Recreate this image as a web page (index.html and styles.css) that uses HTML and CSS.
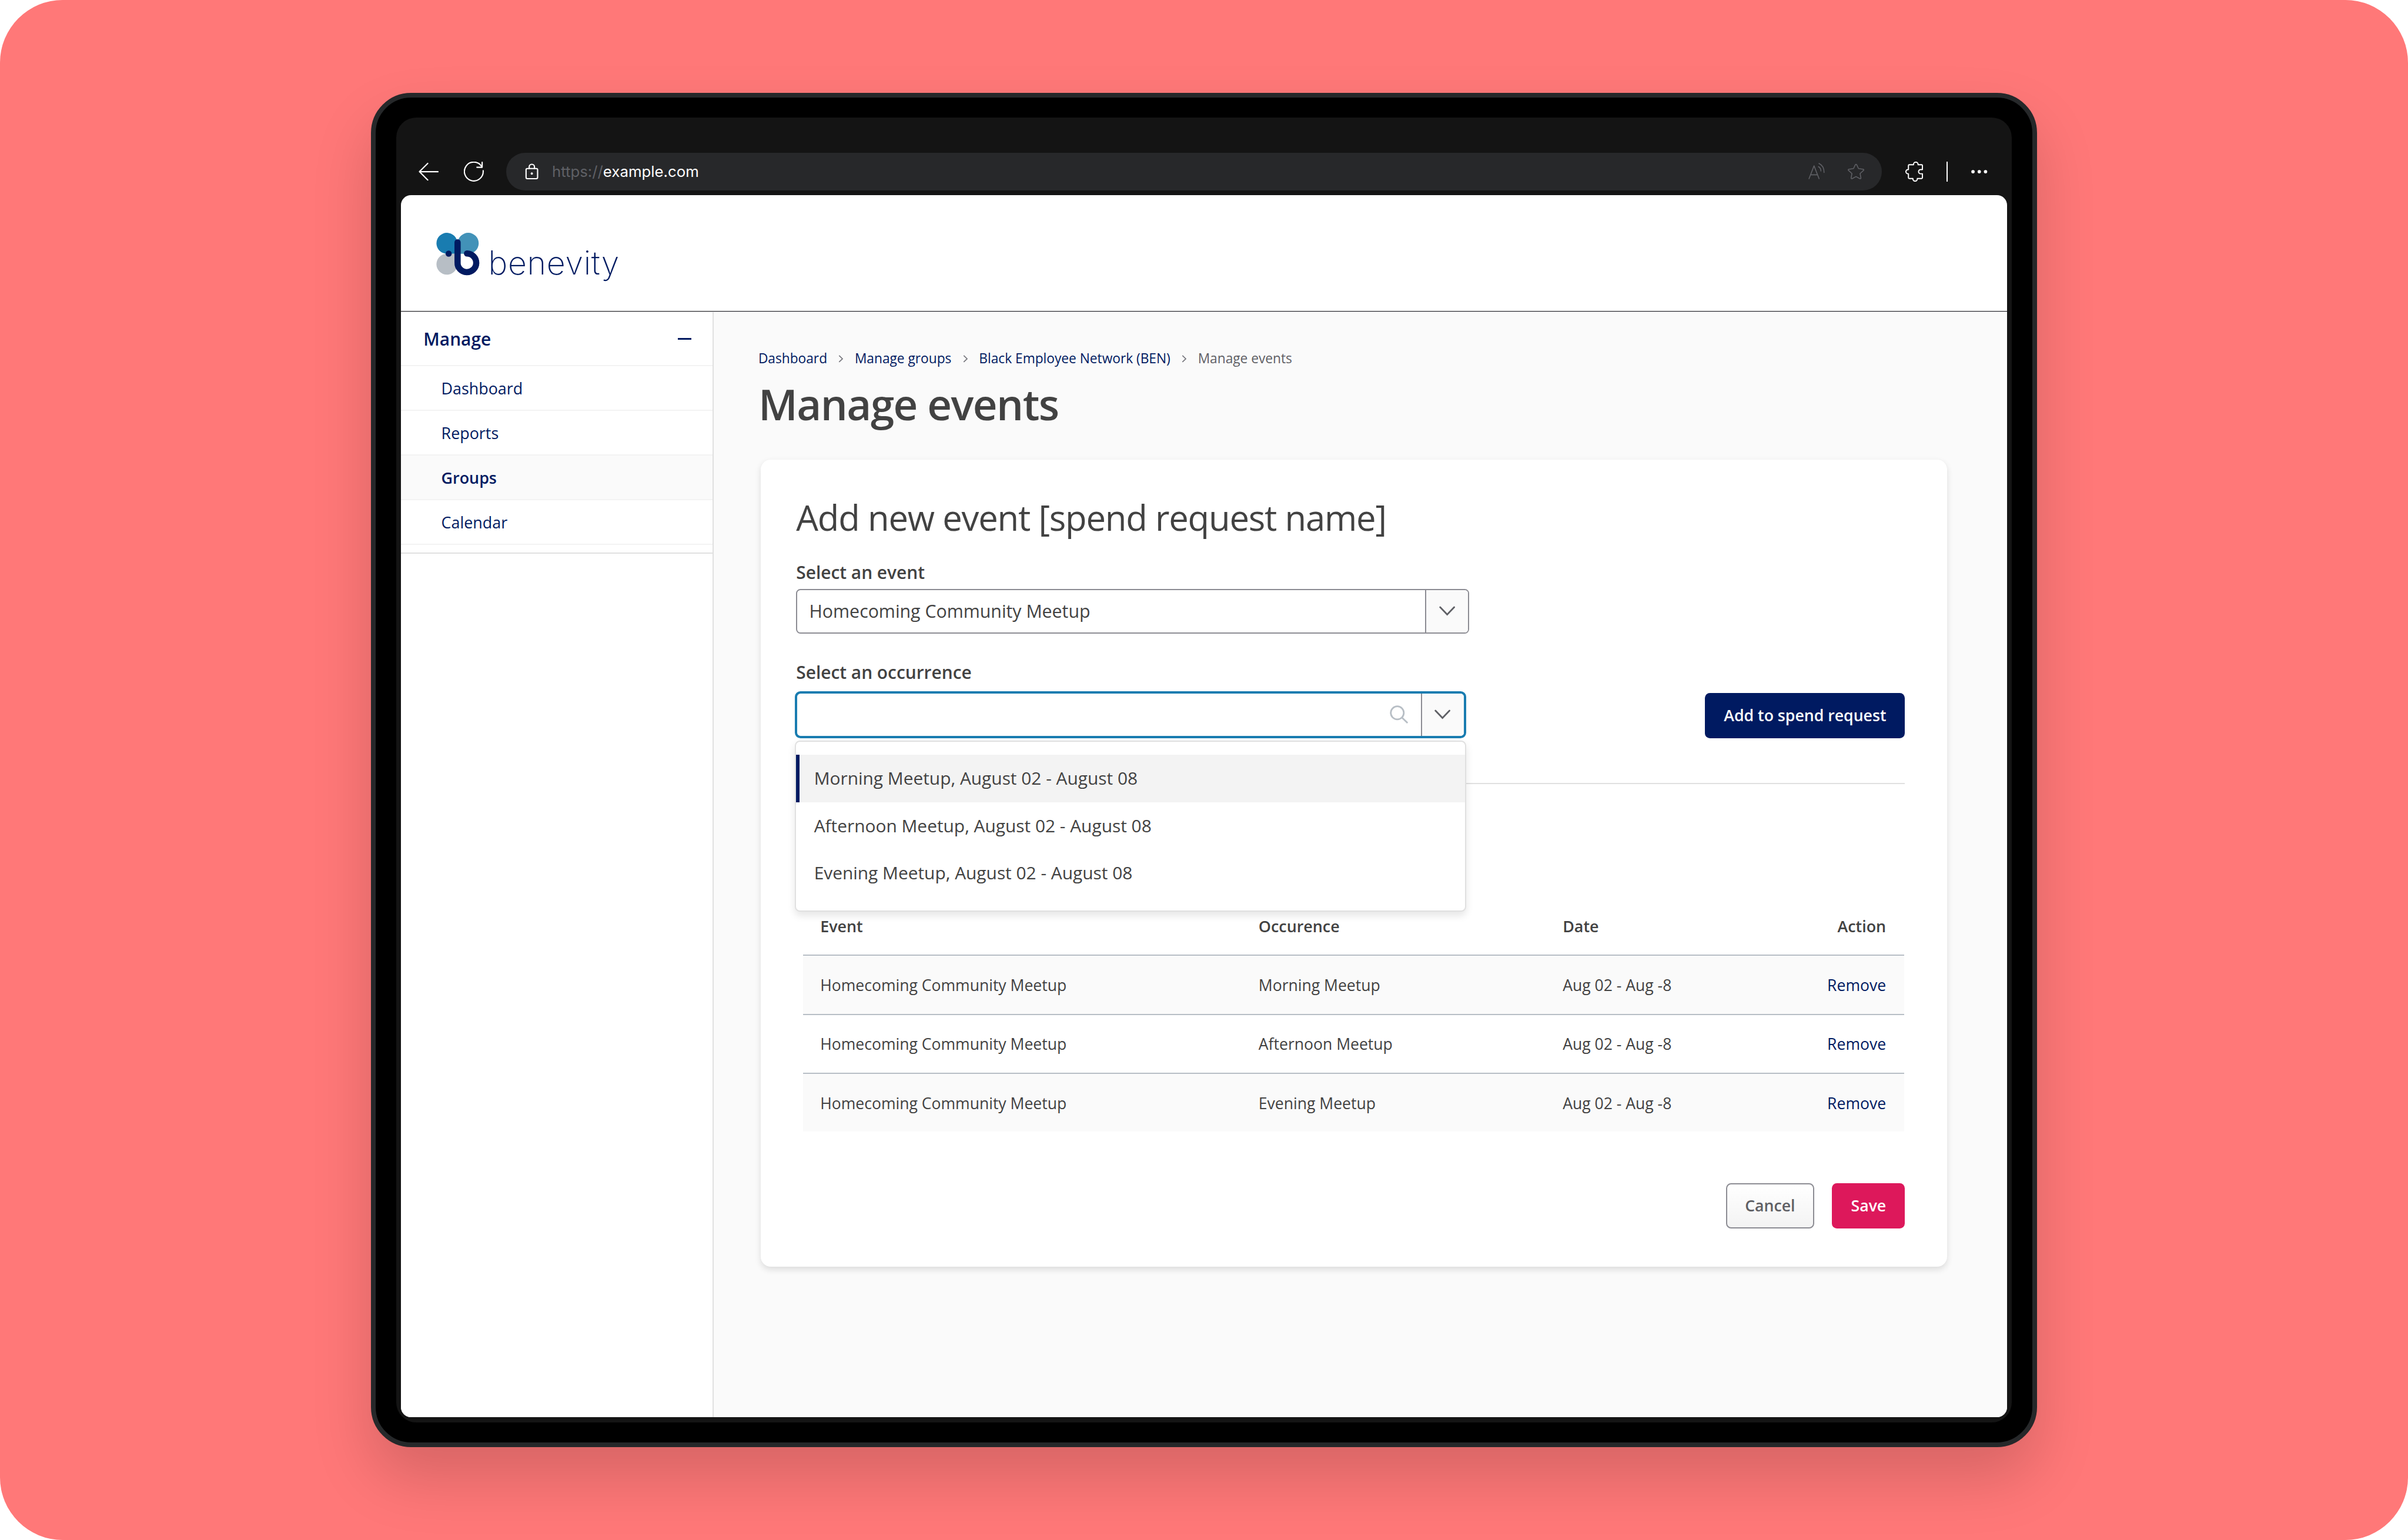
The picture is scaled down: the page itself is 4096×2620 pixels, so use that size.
FILE: index.html
```html
<!DOCTYPE html>
<html lang="en">
<head>
  <meta charset="UTF-8" />
  <meta name="viewport" content="width=device-width, initial-scale=1.0" />
  <title>Manage events</title>
  <link rel="stylesheet" href="styles.css">
</head>
<body>
  <div class="stage">
    <div class="device">
      <div class="screen">
        <div class="browser-bar">
          <svg class="icon" viewBox="0 0 16 16"><path d="M15.5 8H.7M7.3 1.4L.7 8l6.6 6.6" /></svg>
          <svg class="icon refresh" viewBox="0 0 16 16"><path d="M15.4 7.2a7.5 7.5 0 1 1-1.3-3.6M14.6.5v4h-4.2" /></svg>
          <div class="url">
            <svg class="icon" viewBox="0 0 16 16"><rect x="3.2" y="5.5" width="9.2" height="8.1" rx="1" /><path d="M5.7 5.5V4.2a2.1 2.1 0 0 1 4.2 0v1.3" /><circle class="solid" cx="7.8" cy="9.5" r=".9" /></svg>
            <span class="address"><span class="scheme">https://</span>example.com</span>
            <svg class="icon dim read" viewBox="48 48 192 192"><path d="M60 211l48-123 48 123M74 174h68M150 96q25 15 24 42M155 65q50 25 49 87" /></svg>
            <svg class="icon dim" viewBox="414 48 192 192"><path d="M504 77q6-8 12 0l18 37 46 7q8 5 2 11l-33 30 8 43q-1 8-10 6l-37-20-37 20q-9 2-10-6l8-43-33-30q-6-6 2-11l46-7z" /></svg>
          </div>
          <svg class="icon puzzle" viewBox="972 48 192 192"><path d="M1015 78h41v-4a21.500 21.500 0 0 1 43 0v4h34q8 0 8 8v38h-17a20 20 0 0 0 0 40h17v38q0 8-8 8h-41v4a21 21 0 0 1-42 0v-4h-35q-8 0-8-8v-38h-4a20 20 0 0 1 0-40h4v-38q0-8 8-8z" /></svg>
          <span class="separator"></span>
          <svg class="icon dots" viewBox="0 0 14 16"><circle cx="1.900" cy="8" r="1.350" /><circle cx="6.900" cy="8" r="1.350" /><circle cx="11.900" cy="8" r="1.350" /></svg>
        </div>

        <div class="viewport">
          <header class="header">
            <svg class="logo" viewBox="347 185 150 42">
              <path fill="#197cb0" d="M356 185.500a8.350 8.350 0 0 1 8.350 8.350v8.350H356a8.350 8.350 0 0 1 0-16.700z" />
              <path fill="#4292b8" d="M373 185.500a8.350 8.350 0 0 1 0 16.700h-8.350v-8.350a8.350 8.350 0 0 1 8.350-8.350z" />
              <path fill="#b7bec5" d="M356 202.200h8.350v8.350a8.350 8.350 0 1 1-8.350-8.350z" />
              <circle cx="371.900" cy="209.100" r="7" fill="#fff" />
              <circle cx="357.400" cy="202.100" r="2.450" fill="#001a61" />
              <path class="mark" d="M364.500 193.100v16a7.450 7.450 0 1 0 7.500-7.100" />
              <text class="wordmark" x="388.900" y="218.900" textLength="104.500">benevity</text>
            </svg>
          </header>

          <div class="layout">
            <nav class="sidebar">
              <div class="nav-title">Manage <span class="minus"></span></div>
              <a class="nav-item">Dashboard</a>
              <a class="nav-item">Reports</a>
              <a class="nav-item active">Groups</a>
              <a class="nav-item">Calendar</a>
              <div class="nav-end"></div>
            </nav>

            <main class="main">
              <div class="breadcrumb">
                <a>Dashboard</a>
                <svg class="crumb" viewBox="0 0 4 6"><path d="M.6.4L3.300 3 .6 5.600" /></svg>
                <a>Manage groups</a>
                <svg class="crumb" viewBox="0 0 4 6"><path d="M.6.4L3.300 3 .6 5.600" /></svg>
                <a>Black Employee Network (BEN)</a>
                <svg class="crumb" viewBox="0 0 4 6"><path d="M.6.4L3.300 3 .6 5.600" /></svg>
                <span>Manage events</span>
              </div>
              <h1>Manage events</h1>

              <section class="card">
                <h2>Add new event [spend request name]</h2>

                <label>Select an event</label>
                <div class="select">
                  <span class="value">Homecoming Community Meetup</span>
                  <span class="toggle"><svg class="chevron" viewBox="0 0 13 8"><path d="M.8.9l5.600 5.900L12 .9" /></svg></span>
                </div>

                <label class="second">Select an occurrence</label>
                <div class="row">
                  <div class="combo">
                    <div class="select focused">
                      <span class="value"></span>
                      <svg class="search" viewBox="0 0 15 15"><circle cx="6" cy="6" r="5.200" /><path d="M9.800 9.800l4.400 4.300" /></svg>
                      <span class="toggle"><svg class="chevron" viewBox="0 0 13 8"><path d="M.8.9l5.600 5.900L12 .9" /></svg></span>
                    </div>
                    <div class="menu">
                      <div class="option selected">Morning Meetup, August 02 - August 08</div>
                      <div class="option">Afternoon Meetup, August 02 - August 08</div>
                      <div class="option">Evening Meetup, August 02 - August 08</div>
                    </div>
                  </div>
                  <button class="btn primary">Add to spend request</button>
                </div>

                <hr>

                <table>
                  <thead>
                    <tr><th class="col-event">Event</th><th class="col-occurrence">Occurence</th><th>Date</th><th class="action">Action</th></tr>
                  </thead>
                  <tbody>
                    <tr><td>Homecoming Community Meetup</td><td>Morning Meetup</td><td>Aug 02 - Aug -8</td><td class="action"><a>Remove</a></td></tr>
                    <tr><td>Homecoming Community Meetup</td><td>Afternoon Meetup</td><td>Aug 02 - Aug -8</td><td class="action"><a>Remove</a></td></tr>
                    <tr><td>Homecoming Community Meetup</td><td>Evening Meetup</td><td>Aug 02 - Aug -8</td><td class="action"><a>Remove</a></td></tr>
                  </tbody>
                </table>

                <div class="actions">
                  <button class="btn cancel">Cancel</button>
                  <button class="btn save">Save</button>
                </div>
              </section>
            </main>
          </div>
        </div>
      </div>
    </div>
  </div>
</body>
</html>
```
FILE: styles.css
```css
:root {
  --navy: #001a61;
  --blue: #197cb0;
  --pink: #dd185b;
  --text: #424242;
  --muted: #5f6065;
  --border: #8c8c93;
  --line: #b7bec5;
  --line-light: #e0e0e0;
  --bg: #fafafa;
}
* {
  box-sizing: border-box;
}
/* 1rem = 10 design pixels */
html {
  font-size: 21.3333px;
}
body {
  margin: 0;
  background: #fff;
  color: var(--text);
  font-family: "Open Sans", sans-serif;
  font-size: 1.4rem;
  overflow: hidden;
}
.stage {
  width: 192rem;
  height: 122.8125rem;
  padding: 7.4rem 29.6rem;
  background: #ff7878;
  border-radius: 5rem;
}
.device {
  height: 108rem;
  padding: 1.61rem;
  background: #000;
  border: 0.4rem solid #26282a;
  border-radius: 3.2rem;
  box-shadow: 0 2.4rem 4.8rem rgba(0, 0, 0, 0.16);
}
.screen {
  display: flex;
  flex-direction: column;
  height: 100%;
  padding: 0 0.4rem 0.4rem;
  background: #141414;
  border-radius: 1.6rem;
}

/* Browser bar */
.browser-bar {
  display: flex;
  align-items: center;
  height: 6.2rem;
  padding: 2.8rem 1.5rem 0.4rem 1.4rem;
}
.icon {
  flex: none;
  width: 1.6rem;
  height: 1.6rem;
  fill: none;
  stroke: #fff;
  stroke-linecap: round;
  stroke-linejoin: round;
}
.icon .solid,
.dots {
  fill: #fff;
  stroke: none;
}
.refresh {
  margin: 0 1.8rem 0 2rem;
}
.url {
  display: flex;
  align-items: center;
  flex: 1;
  height: 3rem;
  padding: 0 1.27rem 0 1.23rem;
  background: #27282a;
  border-radius: 1.5rem;
}
.address {
  flex: 1;
  margin-left: 0.8rem;
  color: #fff;
  font-family: Inter, sans-serif;
  font-size: 1.21rem;
}
.scheme {
  color: #5f6065;
}
.dim {
  stroke: #5f6065;
  stroke-width: 9;
}
.read {
  margin-right: 1.45rem;
}
.puzzle {
  margin: 0 1.75rem 0 1.8rem;
  stroke-width: 11;
  stroke-linecap: butt;
}
.separator {
  width: 0.11rem;
  height: 1.6rem;
  background: #fff;
}
.dots {
  width: 1.4rem;
  margin-left: 1.8rem;
}

/* Page */
.viewport {
  display: flex;
  flex-direction: column;
  flex: 1;
  background: #fff;
  border-radius: 0.8rem;
  overflow: hidden;
}
.header {
  z-index: 1;
  height: 9.27rem;
  padding: 2.94rem 2.73rem 0;
  border-bottom: 1px solid #2b2b2e;
  box-shadow: 0 1px 0 #c8c8cc;
}
.logo {
  display: block;
  width: 15rem;
  height: 4.2rem;
}
.mark {
  fill: none;
  stroke: var(--navy);
  stroke-width: 4.95;
  stroke-linecap: round;
}
.wordmark {
  fill: var(--navy);
  font-family: Inter, sans-serif;
  font-size: 26px;
  font-weight: 250;
}
.layout {
  display: flex;
  flex: 1;
}
.sidebar {
  width: 24.9rem;
  border-right: 0.1rem solid var(--line-light);
  color: var(--navy);
  background: #fff;
}
.nav-title {
  display: flex;
  align-items: center;
  justify-content: space-between;
  height: 4.26rem;
  padding: 0.1rem 1.67rem 0 1.78rem;
  font-weight: 600;
}
.minus {
  width: 1.08rem;
  height: 0.16rem;
  background: var(--navy);
}
.nav-item {
  display: flex;
  align-items: center;
  height: 3.56rem;
  padding: 0.08rem 3.2rem 0;
  border-top: 0.1rem solid #f3f3f3;
  font-size: 1.26rem;
}
.nav-item.active {
  background: var(--bg);
  font-weight: 600;
}
.nav-end {
  height: 0.8rem;
  border-top: 0.1rem solid #f3f3f3;
  border-bottom: 0.1rem solid var(--line-light);
}
.main {
  flex: 1;
  padding: 2.96rem 4.77rem 0 3.58rem;
  background: var(--bg);
}
.breadcrumb {
  display: flex;
  align-items: center;
  gap: 0.9rem;
  color: var(--navy);
  font-size: 1.065rem;
  line-height: 1.6rem;
}
.breadcrumb span {
  color: var(--muted);
}
.crumb {
  width: 0.4rem;
  height: 0.6rem;
  fill: none;
  stroke: #77777d;
  stroke-width: 0.8;
}
h1 {
  margin: 0.6rem 0 2.23rem;
  font-size: 3.4rem;
  font-weight: 600;
  line-height: 4.4rem;
  letter-spacing: -0.07rem;
}
.card {
  margin-left: 0.21rem;
  padding: 2.68rem 3.35rem 3.04rem 2.81rem;
  background: #fff;
  border-radius: 0.8rem;
  box-shadow: 0 0.2rem 0.5rem rgba(0, 0, 0, 0.12);
}
h2 {
  margin: 0 0 1.66rem;
  font-size: 2.8rem;
  font-weight: 400;
  line-height: 3.8rem;
  letter-spacing: -0.055rem;
}
label {
  display: block;
  margin-bottom: 0.39rem;
  font-weight: 600;
  line-height: 1.8rem;
}
label.second {
  margin: 2.2rem 0 0.61rem;
}
.select {
  display: flex;
  align-items: center;
  width: 53.68rem;
  height: 3.55rem;
  border: 0.1rem solid var(--border);
  border-radius: 0.35rem;
  overflow: hidden;
}
.select.focused {
  width: 100%;
  height: 3.74rem;
  border: 0.19rem solid var(--blue);
  border-radius: 0.45rem;
}
.value {
  flex: 1;
  padding-left: 0.95rem;
  font-size: 1.42rem;
}
.toggle {
  display: flex;
  align-items: center;
  justify-content: center;
  width: 3.45rem;
  height: 100%;
  background: var(--bg);
  border-left: 0.1rem solid var(--border);
}
.chevron {
  width: 1.3rem;
  height: 0.8rem;
  fill: none;
  stroke: var(--muted);
  stroke-width: 1.3;
  stroke-linecap: round;
}
.search {
  width: 1.5rem;
  height: 1.5rem;
  margin-right: 0.96rem;
  fill: none;
  stroke: var(--line);
  stroke-width: 1.3;
}
.row {
  display: flex;
  align-items: flex-end;
  justify-content: space-between;
}
.combo {
  position: relative;
  width: 53.54rem;
  margin-left: -0.11rem;
}
.menu {
  position: absolute;
  top: 3.915rem;
  left: 0;
  width: 100%;
  height: 13.65rem;
  padding-top: 1.05rem;
  background: #fff;
  border: 0.1rem solid var(--line-light);
  border-radius: 0.4rem;
  box-shadow: 0 0.3rem 0.6rem rgba(0, 0, 0, 0.1);
}
.option {
  display: flex;
  align-items: center;
  height: 3.78rem;
  padding: 0 0 0.08rem 1.16rem;
  border-left: 0.29rem solid transparent;
}
.option.selected {
  background: #f3f3f3;
  border-left-color: var(--navy);
}
.btn {
  height: 3.62rem;
  padding: 0;
  border: none;
  border-radius: 0.4rem;
  color: #fff;
  font-family: inherit;
  font-size: 1.25rem;
  font-weight: 600;
}
.primary {
  width: 15.94rem;
  background: var(--navy);
}
hr {
  height: 0.1rem;
  margin: 3.56rem 0 9.04rem;
  border: none;
  background: var(--line-light);
}
table {
  width: 87.82rem;
  margin-left: 0.55rem;
  border-spacing: 0;
  table-layout: fixed;
  font-size: 1.245rem;
}
th,
td {
  height: 4.71rem;
  padding: 0.04rem 1.37rem 0;
  text-align: left;
}
th {
  height: 4.56rem;
  padding-top: 0;
  font-size: 1.26rem;
  font-weight: 600;
}
td {
  border-top: 0.1rem solid var(--line);
}
tbody tr:nth-child(odd) {
  background: var(--bg);
}
.col-event {
  width: 34.95rem;
}
.col-occurrence {
  width: 24.25rem;
}
.action {
  padding-right: 1.47rem;
  text-align: right;
}
.action a {
  color: var(--navy);
}
.actions {
  display: flex;
  justify-content: flex-end;
  gap: 1.43rem;
  margin-top: 4.08rem;
}
.cancel {
  width: 7.03rem;
  border: 0.1rem solid var(--border);
  background: linear-gradient(#fff, #f3f3f3);
  color: var(--muted);
}
.save {
  width: 5.82rem;
  background: var(--pink);
}
```
